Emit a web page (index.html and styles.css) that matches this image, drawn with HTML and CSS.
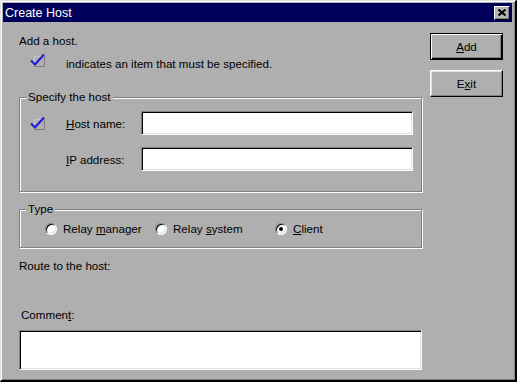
FILE: index.html
```html
<!DOCTYPE html>
<html lang="en">
<head>
    <meta charset="UTF-8">
    <title>Create Host</title>
    <link rel="stylesheet" href="styles.css">
</head>
<body>

<div class="window">
    <div class="titlebar">
        <span class="title">Create Host</span>
        <span class="close">
            <svg width="8" height="7" viewBox="0 0 8 7"><path d="M0.5 0.5 L7.5 6.5 M7.5 0.5 L0.5 6.5" stroke="#000" stroke-width="2" fill="none"/></svg>
        </span>
    </div>

    <div class="content">
        <div class="main">
            <p class="intro">Add a host.</p>

            <div class="note">
                <svg class="req" width="16" height="14" viewBox="0 0 16 14">
                    <path d="M4.5 13 V3.5 H14" stroke="#c8c8c8" fill="none"/>
                    <path d="M4 13.5 H14.5 V3" stroke="#7c7c7c" fill="none"/>
                    <path d="M1 7.5 L5 11.5 L14 1.5" stroke="#1a1ad8" stroke-width="2" fill="none"/>
                </svg>
                <span>indicates an item that must be specified.</span>
            </div>

            <div class="group host-group">
                <div class="legend">Specify the host</div>
                <div class="field">
                    <svg class="req" width="16" height="14" viewBox="0 0 16 14">
                        <path d="M4.5 13 V3.5 H14" stroke="#c8c8c8" fill="none"/>
                        <path d="M4 13.5 H14.5 V3" stroke="#7c7c7c" fill="none"/>
                        <path d="M1 7.5 L5 11.5 L14 1.5" stroke="#1a1ad8" stroke-width="2" fill="none"/>
                    </svg>
                    <label><u>H</u>ost name:</label>
                    <div class="input"></div>
                </div>
                <div class="field">
                    <span></span>
                    <label><u>I</u>P address:</label>
                    <div class="input"></div>
                </div>
            </div>

            <div class="group type-group">
                <div class="legend">Type</div>
                <div class="radios">
                    <div class="radio"><span class="dot"></span><span>Relay <u>m</u>anager</span></div>
                    <div class="radio"><span class="dot"></span><span>Relay <u>s</u>ystem</span></div>
                    <div class="radio"><span class="dot checked"></span><span><u>C</u>lient</span></div>
                </div>
            </div>

            <p class="route">Route to the host:</p>
            <p class="comment-label">Commen<u>t</u>:</p>
            <div class="textarea"></div>
        </div>

        <div class="side">
            <button class="btn default"><u>A</u>dd</button>
            <button class="btn">E<u>x</u>it</button>
        </div>
    </div>
</div>

</body>
</html>
```

FILE: styles.css
```css
body {
    margin: 0;
    font-family: "Liberation Sans", Arial, sans-serif;
    font-size: 11.6px;
    color: #000;
    background-color: #afafaf;
}

p {
    margin: 0;
}

.window {
    width: 517px;
    height: 382px;
    box-sizing: border-box;
    background-color: #afafaf;
    border-style: solid;
    border-width: 1px 2px 2px 1px;
    border-color: #dfdfdf #000 #000 #dfdfdf;
    box-shadow: inset 1px 1px #fff, inset -1px -1px #808080;
    padding: 2px 3px 2px 2px;
}

/* title bar */
.titlebar {
    height: 19px;
    background-color: #00005a;
    display: flex;
    align-items: center;
    justify-content: space-between;
    padding: 0 2px 0 2px;
}

.title {
    color: #fff;
    font-size: 12.5px;
}

.close {
    width: 16px;
    height: 14px;
    box-sizing: border-box;
    background-color: #b4b4b4;
    border: 1px solid;
    border-color: #fff #000 #000 #fff;
    box-shadow: inset -1px -1px #808080;
    display: flex;
    align-items: center;
    justify-content: center;
}

/* dialog body */
.content {
    display: flex;
    padding-left: 16px;
}

.main {
    width: 403px;
}

.intro {
    margin-top: 12px;
    line-height: 14px;
}

.note {
    display: flex;
    align-items: flex-start;
    margin-top: 5px;
    padding-left: 11px;
}

.note span {
    margin-top: 4px;
    margin-left: 20px;
    line-height: 14px;
}

.req {
    display: block;
}

/* group boxes */
.group {
    border: 1px solid #808080;
    box-shadow: inset 1px 1px #fff, 1px 1px #fff;
}

.legend {
    width: fit-content;
    margin: -8px 0 0 6px;
    padding: 0 2px;
    line-height: 14px;
    background-color: #afafaf;
    position: relative;
}

.host-group {
    margin-top: 26px;
    padding-bottom: 20px;
}

.field {
    display: grid;
    grid-template-columns: 16px 55px 272px;
    column-gap: 20px;
    align-items: center;
    padding-left: 10px;
    margin-top: 7px;
}

.field + .field {
    margin-top: 12px;
}

.field label {
    white-space: nowrap;
}

.input {
    height: 24px;
    box-sizing: border-box;
    background-color: #fff;
    border: 1px solid;
    border-color: #808080 #fff #fff #808080;
    box-shadow: inset 1px 1px #000, inset -1px -1px #dfdfdf;
}

.type-group {
    margin-top: 17px;
    padding-bottom: 11px;
}

.radios {
    display: grid;
    grid-template-columns: 110px 120px auto;
    padding-left: 25px;
    margin-top: 6px;
}

.radio {
    display: flex;
    align-items: center;
    gap: 6px;
    line-height: 14px;
    white-space: nowrap;
}

.dot {
    width: 12px;
    height: 12px;
    box-sizing: border-box;
    border-radius: 50%;
    background-color: #fff;
    border: 1px solid;
    border-color: #808080 #fff #fff #808080;
    box-shadow: inset 1px 1px #000, inset -1px -1px #dfdfdf;
    display: flex;
    align-items: center;
    justify-content: center;
}

.dot.checked::after {
    content: "";
    width: 4px;
    height: 4px;
    border-radius: 50%;
    background-color: #000;
}

.route {
    margin-top: 11px;
    line-height: 14px;
}

.comment-label {
    margin-top: 35px;
    padding-left: 2px;
    line-height: 14px;
}

.textarea {
    margin-top: 8px;
    height: 40px;
    box-sizing: border-box;
    background-color: #fff;
    border: 1px solid;
    border-color: #808080 #fff #fff #808080;
    box-shadow: inset 1px 1px #000, inset -1px -1px #dfdfdf;
}

/* buttons */
.side {
    display: flex;
    flex-direction: column;
    gap: 10px;
    margin-left: 8px;
    padding-top: 11px;
}

.btn {
    width: 73px;
    height: 27px;
    box-sizing: border-box;
    font-family: "Liberation Sans", Arial, sans-serif;
    font-size: 11.6px;
    color: #000;
    background-color: #afafaf;
    border: 1px solid;
    border-color: #fff #000 #000 #fff;
    box-shadow: inset -1px -1px #808080, inset 1px 1px #dfdfdf;
    padding: 0;
}

.btn.default {
    border-color: #000;
    box-shadow: inset 1px 1px #fff, inset -1px -1px #000, inset -2px -2px #808080;
}
```
